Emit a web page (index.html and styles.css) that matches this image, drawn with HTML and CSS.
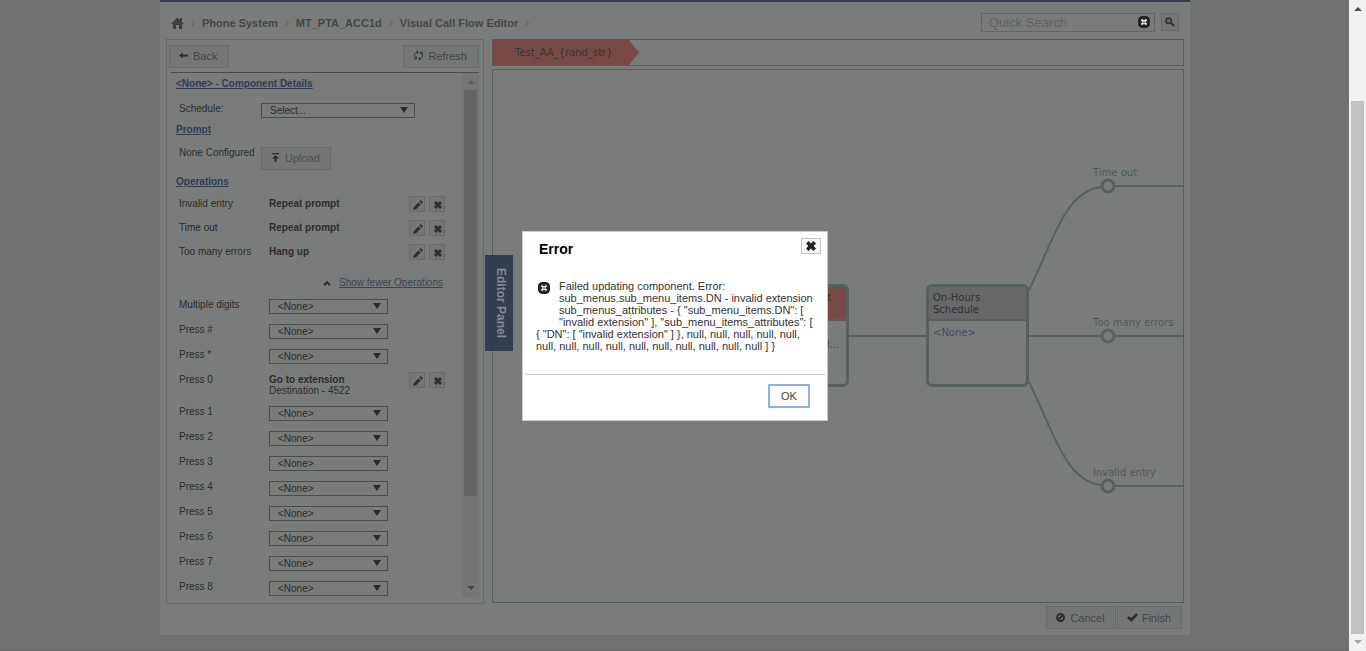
FILE: index.html
```html
<!DOCTYPE html>
<html lang="en">
<head>
<meta charset="utf-8">
<title>Visual Call Flow Editor</title>
<link rel="stylesheet" href="styles.css">
</head>
<body>
<svg class="defs" aria-hidden="true">
  <symbol id="pencil" viewBox="0 0 10 10"><path d="M0 10l.8-3L5.600 2.200 7.800 4.400 3 9.200zM6.300 1.500L7.700 0 10 2.300 8.500 3.700z"/></symbol>
  <symbol id="cross" viewBox="0 0 10 10"><path d="M2.5 0L5 2.4 7.5 0 10 2.5 7.6 5 10 7.5 7.5 10 5 7.6 2.5 10 0 7.5 2.4 5 0 2.5z"/></symbol>
  <symbol id="round-cross" viewBox="0 0 12 12"><rect width="12" height="12" rx="4.5"/><path class="mark" d="M3.500 3.500l5 5m0-5l-5 5"/><rect x="5.300" y="5.300" width="1.400" height="1.400"/></symbol>
</svg>
<div class="window">
  <div class="site">
    <main class="page">
      <header class="top">
        <nav class="crumbs" aria-label="Breadcrumb">
          <a href="#" aria-label="Home"><svg class="home" viewBox="0 0 12 12"><path d="M0 6.3L6 .5 8.5 3V1h2v4L12 6.3v1h-1.500V12H7.500V8h-3v4h-3V7.300H0z"/></svg></a>
          <svg class="chev" viewBox="0 0 4 8"><path d="M.5.5L3.500 4 .5 7.500"/></svg>
          <a href="#">Phone System</a>
          <svg class="chev" viewBox="0 0 4 8"><path d="M.5.5L3.500 4 .5 7.500"/></svg>
          <a href="#">MT_PTA_ACC1d</a>
          <svg class="chev" viewBox="0 0 4 8"><path d="M.5.5L3.500 4 .5 7.500"/></svg>
          <a href="#">Visual Call Flow Editor</a>
          <svg class="chev" viewBox="0 0 4 8"><path d="M.5.5L3.500 4 .5 7.500"/></svg>
        </nav>
        <form class="search">
          <div class="search-box">
            <input type="text" placeholder="Quick Search" aria-label="Quick Search">
            <button type="button" class="clear" aria-label="Clear"><svg class="i12 dim"><use href="#round-cross"/></svg></button>
          </div>
          <button type="button" class="find" aria-label="Search"><svg viewBox="0 0 10 10"><circle cx="3.700" cy="3.700" r="2.800"/><path d="M6 6l3.300 3"/></svg></button>
        </form>
      </header>

      <div class="columns">
        <section class="side">
          <div class="side-bar">
            <button type="button" class="btn"><svg class="i9" viewBox="0 0 9 9"><path d="M0 4.500L4 1.500v2h5v2H4v2z"/></svg>Back</button>
            <button type="button" class="btn"><svg class="i11 line" viewBox="0 0 11 11"><path d="M4 2.200C1.500 3 .8 5.500 2 7.500L3 8.700M1 8.800h2.300V6.500M7 8.800C9.500 8 10.200 5.500 9 3.500L8 2.300M10 2.200H7.700v2.300M4 2.200h1.500M4.200.5v3.300M7 8.800H5.500M6.800 7.200v3.300"/></svg>Refresh</button>
          </div>
          <div class="scroll">
            <div class="details">
              <h2>&lt;None&gt; - Component Details</h2>
              <div class="row wide schedule">
                <label for="schedule">Schedule:</label>
                <div class="pick"><select id="schedule"><option>Select...</option></select></div>
              </div>
              <h2>Prompt</h2>
              <div class="row wide prompt">
                <span>None Configured</span>
                <button type="button" class="btn upload"><svg class="i9" viewBox="0 0 9 9"><path d="M1 0h7v1.300H1zM4.500 2L8 5.500H5.600V9H3.400V5.500H1z"/></svg>Upload</button>
              </div>
              <h2>Operations</h2>
              <div class="ops">
                <div class="row"><span>Invalid entry</span><b>Repeat prompt</b><div class="tools"><button type="button" aria-label="Edit"><svg><use href="#pencil"/></svg></button><button type="button" aria-label="Remove"><svg class="x"><use href="#cross"/></svg></button></div></div>
                <div class="row"><span>Time out</span><b>Repeat prompt</b><div class="tools"><button type="button" aria-label="Edit"><svg><use href="#pencil"/></svg></button><button type="button" aria-label="Remove"><svg class="x"><use href="#cross"/></svg></button></div></div>
                <div class="row"><span>Too many errors</span><b>Hang up</b><div class="tools"><button type="button" aria-label="Edit"><svg><use href="#pencil"/></svg></button><button type="button" aria-label="Remove"><svg class="x"><use href="#cross"/></svg></button></div></div>
              </div>
              <div class="fewer"><svg viewBox="0 0 8 5"><path d="M1 4.200l3-3 3 3"/></svg><a href="#">Show fewer Operations</a></div>
              <div class="keys">
                <div class="row"><label for="kd">Multiple digits</label><div class="pick"><select id="kd"><option>&lt;None&gt;</option></select></div></div>
                <div class="row"><label for="kh">Press #</label><div class="pick"><select id="kh"><option>&lt;None&gt;</option></select></div></div>
                <div class="row"><label for="ks">Press *</label><div class="pick"><select id="ks"><option>&lt;None&gt;</option></select></div></div>
                <div class="row zero"><span>Press 0</span><div><b>Go to extension</b><br>Destination - 4522</div><div class="tools"><button type="button" aria-label="Edit"><svg><use href="#pencil"/></svg></button><button type="button" aria-label="Remove"><svg class="x"><use href="#cross"/></svg></button></div></div>
                <div class="row"><label for="k1">Press 1</label><div class="pick"><select id="k1"><option>&lt;None&gt;</option></select></div></div>
                <div class="row"><label for="k2">Press 2</label><div class="pick"><select id="k2"><option>&lt;None&gt;</option></select></div></div>
                <div class="row"><label for="k3">Press 3</label><div class="pick"><select id="k3"><option>&lt;None&gt;</option></select></div></div>
                <div class="row"><label for="k4">Press 4</label><div class="pick"><select id="k4"><option>&lt;None&gt;</option></select></div></div>
                <div class="row"><label for="k5">Press 5</label><div class="pick"><select id="k5"><option>&lt;None&gt;</option></select></div></div>
                <div class="row"><label for="k6">Press 6</label><div class="pick"><select id="k6"><option>&lt;None&gt;</option></select></div></div>
                <div class="row"><label for="k7">Press 7</label><div class="pick"><select id="k7"><option>&lt;None&gt;</option></select></div></div>
                <div class="row"><label for="k8">Press 8</label><div class="pick"><select id="k8"><option>&lt;None&gt;</option></select></div></div>
              </div>
            </div>
            <div class="bar inner" aria-hidden="true">
              <svg class="arrow up" viewBox="0 0 8 4"><path d="M4 0l4 4H0z"/></svg>
              <div class="track"><div class="thumb"></div></div>
              <svg class="arrow down" viewBox="0 0 8 4"><path d="M0 0h8L4 4z"/></svg>
            </div>
          </div>
        </section>

        <section class="flow">
          <div class="tabs"><div class="tab">Test_AA_{rand_str}</div></div>
          <div class="canvas">
            <svg class="wires" width="690" height="532">
              <path d="M354 266h80M535 266h73M622 266h68M622 116h68M622 416h68"/>
              <path d="M536 220C560 172 572 120 609 117M536 312C560 360 572 412 609 415"/>
              <g class="ports"><circle cx="615" cy="116" r="6"/><circle cx="615" cy="266" r="6"/><circle cx="615" cy="416" r="6"/></g>
              <g class="names"><text x="600" y="106">Time out</text><text x="600" y="256">Too many errors</text><text x="600" y="406">Invalid entry</text></g>
            </svg>
            <div class="node attendant"><h3>t</h3><p>l...</p></div>
            <div class="node hours"><h3>On-Hours Schedule</h3><p>&lt;None&gt;</p></div>
            <button type="button" class="editor-panel">Editor Panel</button>
          </div>
        </section>
      </div>

      <footer class="actions">
        <button type="button" class="btn"><svg class="i9 ban" viewBox="0 0 9 9"><circle cx="4.500" cy="4.500" r="3.500"/><path d="M2.200 6.800l4.600-4.600"/></svg>Cancel</button>
        <button type="button" class="btn"><svg class="i11" viewBox="0 0 11 9"><path d="M0 5l2-2 2.200 2L9 0l2 1.800L4.500 9z"/></svg>Finish</button>
      </footer>
    </main>
    <div class="version">19.03.1.67</div>

    <div class="shade">
      <div class="dialog" role="alertdialog" aria-labelledby="err-title">
        <header>
          <h1 id="err-title">Error</h1>
          <button type="button" class="close" aria-label="Close"><svg><use href="#cross"/></svg></button>
        </header>
        <div class="message"><svg class="i12"><use href="#round-cross"/></svg>Failed updating component. Error: sub_menus.sub_menu_items.DN - invalid extension sub_menus_attributes - { "sub_menu_items.DN": [ "invalid extension" ], "sub_menu_items_attributes": [ { "DN": [ "invalid extension" ] }, null, null, null, null, null, null, null, null, null, null, null, null, null, null, null ] }</div>
        <footer><button type="button" class="ok">OK</button></footer>
      </div>
    </div>
  </div>
  <div class="bar outer" aria-hidden="true">
    <svg class="arrow up" viewBox="0 0 8 4"><path d="M4 0l4 4H0z"/></svg>
    <div class="track"><div class="thumb"></div></div>
    <svg class="arrow down" viewBox="0 0 8 4"><path d="M0 0h8L4 4z"/></svg>
  </div>
</div>
</body>
</html>
```

FILE: styles.css
```css
* { box-sizing: border-box; }
body { margin: 0; background: #707271; color: #2b2c2c; font: 10px/12px "Liberation Sans", Arial, sans-serif; }
h1, h2, h3, p { margin: 0; }
button, select, input { font: inherit; color: inherit; margin: 0; padding: 0; border-radius: 0; }
svg { display: block; fill: #2e2f2f; flex: none; }
.defs { position: absolute; width: 0; height: 0; }
.i9 { width: 9px; height: 9px; }
.i11 { width: 11px; height: 11px; margin-right: -1px; }
.i12 { width: 12px; height: 12px; fill: #222; }
.mark { fill: none; stroke: #fff; stroke-width: 2; }
.dim .mark { stroke: #7a7c7b; }
.line { fill: none; stroke: #2e2f2f; stroke-width: 1; }

.window { display: flex; min-height: 100vh; }
.site { flex: 1; position: relative; padding-left: 1px; border-bottom: 1px solid #676565; }
.page { max-width: 1030px; margin: 0 auto; border-top: 2px solid #323d4d; background: #7a7c7b; padding: 0 6px 6px; }

.top { display: flex; justify-content: space-between; align-items: center; height: 37px; padding: 0 5px 0 5px; }
.crumbs { display: flex; align-items: center; gap: 7px; padding-top: 4px; font-weight: bold; font-size: 11px; }
.crumbs a { color: #444645; text-decoration: none; }
.home { width: 13px; height: 12px; fill: #3d3f3e; }
.chev { width: 4px; height: 8px; fill: none; stroke: #606261; }
.search { display: flex; gap: 6px; padding-top: 3px; }
.search-box { display: flex; align-items: center; width: 174px; height: 19px; border: 1px solid #656766; padding: 0 4px 0 7px; }
.search-box input { flex: 1; min-width: 0; border: 0; background: none; font-size: 13px; outline: 0; }
.search-box input::placeholder { color: #616362; opacity: 1; }
.clear { border: 0; background: none; }
.find { width: 18px; height: 18px; display: grid; place-items: center; border: 1px solid #686a69; background: #757776; }
.find svg { width: 10px; height: 10px; fill: #666; stroke: #2e2f2f; stroke-width: 1.500; }
.find path { stroke-width: 2; }

.columns { display: flex; gap: 8px; }
.side { width: 318px; border: 1px solid #686a69; padding: 5px 4px 6px 2px; }
.side-bar { display: flex; justify-content: space-between; margin-bottom: 4px; }
.btn { display: flex; align-items: center; gap: 5px; height: 23px; padding: 0 11px 2px 9px; border: 1px solid #6a6c6b; background: #757776; color: #424443; font-size: 11px; }
.actions .btn { padding: 0 10px 0 9px; }
.scroll { display: flex; margin-left: 2px; border-top: 1px solid #4a4c4b; }
.details { flex: 1; padding: 5px 0 1px 5px; }
h2 { font-size: 10px; line-height: 12px; color: #313c52; text-decoration: underline; }
.row { display: grid; grid-template-columns: 90px 119px 1fr; padding: 0 17px 0 3px; }
.row.wide { grid-template-columns: 82px auto; justify-content: start; }
.schedule { padding-top: 13px; height: 34px; }
.schedule .pick { width: 154px; }
.prompt { padding-top: 11px; height: 40px; }
.prompt span { white-space: nowrap; }
.upload { width: 70px; color: #4a4c4e; }
.pick { position: relative; height: 15px; border: 1px solid #4c4e4d; }
.pick select { display: block; width: 100%; height: 13px; padding: 1px 0 0 8px; border: 0; background: none; appearance: none; line-height: 12px; }
.pick::after { content: ""; position: absolute; right: 6px; top: 3px; border: 4px solid transparent; border-top: 6px solid #2a2b2b; border-bottom: 0; }
.ops { display: grid; gap: 12px; padding-top: 10px; }
.tools { display: flex; justify-content: flex-end; gap: 4px; height: 12px; margin-top: -2px; }
.tools button { display: grid; place-items: center; width: 16px; height: 16px; padding: 1px 0 0 2px; border: 1px solid #696b6a; background: #757776; }
.tools svg { width: 10px; height: 10px; }
.tools .x { width: 8px; height: 8px; }
.ops .row:last-child { height: 12px; }
.fewer { display: flex; justify-content: flex-end; align-items: center; gap: 8px; padding: 19px 19px 10px 0; }
.fewer a { color: #3a4556; }
.fewer svg { width: 8px; height: 5px; fill: none; stroke: #2e2f2f; stroke-width: 2; }
.keys { display: grid; gap: 10px; }
.keys .row { height: 15px; }
.keys .zero { height: 22px; line-height: 11px; white-space: nowrap; }

.bar { display: flex; flex-direction: column; align-items: center; width: 17px; }
.arrow { width: 8px; height: 4px; }
.track { flex: 1; width: 13px; }
.inner { background: #747675; padding: 7px 0; }
.inner .arrow { fill: #444645; }
.inner .up { fill: #5c5e5d; }
.inner .track { margin: 6px 0 7px; }
.inner .thumb { height: 83%; background: #656464; }
.outer { background: #f1f1f1; padding: 7px 0; }
.outer .arrow { fill: #505050; }
.outer .down { fill: #a3a3a3; }
.outer .track { display: flex; margin: 6px 0; }
.outer .thumb { flex: 1; margin-top: 84px; background: #c1c1c1; }

.flow { flex: 1; min-width: 0; display: flex; flex-direction: column; gap: 3px; font-family: "DejaVu Sans", Verdana, sans-serif; }
.tabs { height: 27px; border: 1px solid #565e5c; display: flex; }
.tab { width: 146px; padding: 0 23px 0 22px; color: #3a3333; line-height: 26px; background: #794947; clip-path: polygon(0 0, 136px 0, 100% 50%, 136px 100%, 0 100%); }
.canvas { flex: 1; position: relative; margin-bottom: 1px; border: 1px solid #565e5c; }
.wires { position: absolute; left: 0; top: 0; fill: none; stroke: #56605d; stroke-width: 2; }
.ports { stroke-width: 3; }
.names { fill: #505856; stroke: none; }
.node { position: absolute; top: 214px; width: 103px; height: 103px; border: 3px solid #56605d; border-radius: 6px; overflow: hidden; }
.attendant { left: 253px; }
.hours { left: 433px; }
.node h3 { height: 34px; padding: 5px 4px; border-bottom: 2px solid #56605d; background: #686868; color: #2f3030; font-size: 10px; line-height: 12px; font-weight: normal; }
.node p { padding: 6px 4px; color: #3e4c57; white-space: nowrap; }
.attendant h3 { padding-left: 78px; background: #794947; }
.attendant p { padding: 18px 0 0 78px; }
.editor-panel { position: absolute; left: -8px; top: 185px; width: 28px; height: 96px; padding-left: 4px; border: 0; background: #343e50; color: #868a90; font: bold 12px/24px "Liberation Sans", Arial, sans-serif; writing-mode: vertical-rl; }

.actions { display: flex; justify-content: flex-end; gap: 1px; padding: 2px 2px 0; }
.ban { fill: none; stroke: #2e2f2f; stroke-width: 2; }
.version { position: absolute; left: 16px; bottom: -1px; font-size: 8px; line-height: 10px; color: #756d6d; }

.shade { position: absolute; inset: 2px 0 0 1px; display: grid; place-items: center; }
.dialog { width: 306px; padding: 6px 2px 12px; border: 1px solid #c8c8c8; background: #fff; color: #333; font-size: 11px; }
.dialog header { display: flex; justify-content: space-between; padding: 0 4px 0 14px; }
.dialog h1 { color: #000; font-size: 14px; line-height: 22px; }
.close { display: grid; place-items: center; width: 20px; height: 16px; border: 1px solid #c4c4c4; background: #f5f5f5; }
.close svg { width: 10px; height: 10px; fill: #222; }
.message { padding: 20px 10px 22px 11px; }
.message .i12 { float: left; margin: 2px 9px 32px 2px; }
.dialog footer { display: flex; justify-content: flex-end; padding: 9px 15px 0 0; border-top: 1px solid #ccc; }
.ok { width: 42px; height: 24px; border: 2px solid #8ab0f0; background: #fcfdfd; color: #444; }
```
